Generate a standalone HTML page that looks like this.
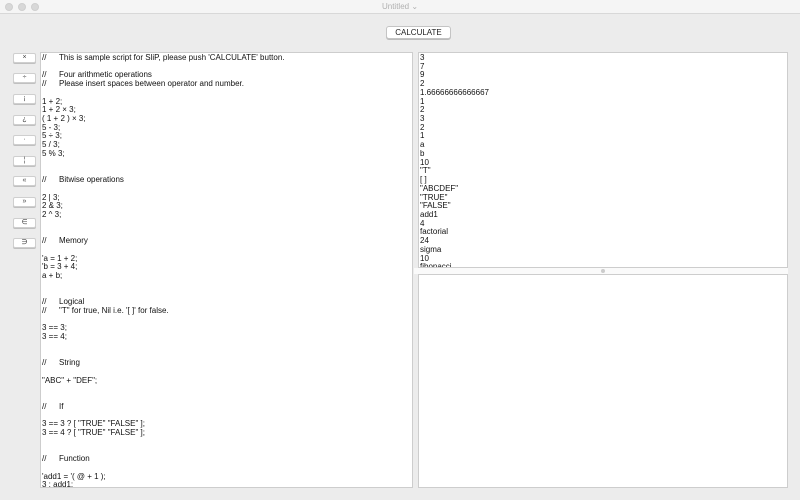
<!DOCTYPE html>
<html><head><meta charset="utf-8"><style>
*{margin:0;padding:0;box-sizing:border-box}
body{width:800px;height:500px;background:#ececec;font-family:"Liberation Sans",sans-serif;position:relative;overflow:hidden}
.title{position:absolute;left:0;top:0;width:800px;height:14px;background:#f5f5f5;border-bottom:1px solid #d8d8d8;text-align:center;font-size:8px;line-height:14px;color:#b0b0b0}
.dot{position:absolute;top:3px;width:8px;height:8px;border-radius:50%;background:#d8d8d8;border:1px solid #cfcfcf}
.calc{position:absolute;left:386px;top:26px;width:65px;height:13px;background:#fff;border:1px solid #c4c4c4;border-radius:3px;font-size:8px;line-height:11px;text-align:center;color:#222;box-shadow:0 1px 0 #bbb}
.btn{position:absolute;left:13px;width:23px;height:10px;background:#fff;border:1px solid #cfcfcf;border-radius:2px;font-size:7px;line-height:8px;text-align:center;color:#444;box-shadow:0 1px 0 #c0c0c0}
.panel{position:absolute;background:#fff;border:1px solid #cdcdcd;overflow:hidden;font-size:8px;color:#111}
.l{height:8.72px;line-height:8.72px;white-space:pre;position:relative}
.c span{position:absolute;left:17px}
</style></head><body>
<div class="title">Untitled ⌄</div>
<div class="dot" style="left:5px"></div><div class="dot" style="left:18px"></div><div class="dot" style="left:31px"></div>
<div class="calc">CALCULATE</div>
<div class="btn" style="top:53px">×</div>
<div class="btn" style="top:73px">÷</div>
<div class="btn" style="top:94px">¡</div>
<div class="btn" style="top:115px">¿</div>
<div class="btn" style="top:135px">·</div>
<div class="btn" style="top:156px">¦</div>
<div class="btn" style="top:176px">«</div>
<div class="btn" style="top:197px">»</div>
<div class="btn" style="top:218px">∈</div>
<div class="btn" style="top:238px">∋</div>
<div class="panel" style="left:40px;top:52px;width:373px;height:436px;padding:1px 0 0 1px">
<div class="l c">//<span>This is sample script for SliP, please push 'CALCULATE' button.</span></div>
<div class="l"></div>
<div class="l c">//<span>Four arithmetic operations</span></div>
<div class="l c">//<span>Please insert spaces between operator and number.</span></div>
<div class="l"></div>
<div class="l">1 + 2;</div>
<div class="l">1 + 2 × 3;</div>
<div class="l">( 1 + 2 ) × 3;</div>
<div class="l">5 - 3;</div>
<div class="l">5 ÷ 3;</div>
<div class="l">5 / 3;</div>
<div class="l">5 % 3;</div>
<div class="l"></div><div class="l"></div>
<div class="l c">//<span>Bitwise operations</span></div>
<div class="l"></div>
<div class="l">2 | 3;</div>
<div class="l">2 &amp; 3;</div>
<div class="l">2 ^ 3;</div>
<div class="l"></div><div class="l"></div>
<div class="l c">//<span>Memory</span></div>
<div class="l"></div>
<div class="l">'a = 1 + 2;</div>
<div class="l">'b = 3 + 4;</div>
<div class="l">a + b;</div>
<div class="l"></div><div class="l"></div>
<div class="l c">//<span>Logical</span></div>
<div class="l c">//<span>"T" for true, Nil i.e. '[ ]' for false.</span></div>
<div class="l"></div>
<div class="l">3 == 3;</div>
<div class="l">3 == 4;</div>
<div class="l"></div><div class="l"></div>
<div class="l c">//<span>String</span></div>
<div class="l"></div>
<div class="l">"ABC" + "DEF";</div>
<div class="l"></div><div class="l"></div>
<div class="l c">//<span>If</span></div>
<div class="l"></div>
<div class="l">3 == 3 ? [ "TRUE" "FALSE" ];</div>
<div class="l">3 == 4 ? [ "TRUE" "FALSE" ];</div>
<div class="l"></div><div class="l"></div>
<div class="l c">//<span>Function</span></div>
<div class="l"></div>
<div class="l">'add1 = '( @ + 1 );</div>
<div class="l">3 : add1;</div>
</div>
<div class="panel" style="left:418px;top:52px;width:370px;height:216px;padding:1px 0 0 1px">
<div class="l">3</div><div class="l">7</div><div class="l">9</div><div class="l">2</div>
<div class="l">1.66666666666667</div>
<div class="l">1</div><div class="l">2</div><div class="l">3</div><div class="l">2</div><div class="l">1</div>
<div class="l">a</div><div class="l">b</div><div class="l">10</div>
<div class="l">"T"</div><div class="l">[ ]</div>
<div class="l">"ABCDEF"</div><div class="l">"TRUE"</div><div class="l">"FALSE"</div>
<div class="l">add1</div><div class="l">4</div><div class="l">factorial</div><div class="l">24</div>
<div class="l">sigma</div><div class="l">10</div><div class="l">fibonacci</div>
</div>
<div style="position:absolute;left:414px;top:268px;width:374px;height:6px;background:#fafafa"></div>
<div style="position:absolute;left:601px;top:269px;width:4px;height:4px;border-radius:50%;background:#ccc"></div>
<div class="panel" style="left:418px;top:274px;width:370px;height:214px"></div>
</body></html>
